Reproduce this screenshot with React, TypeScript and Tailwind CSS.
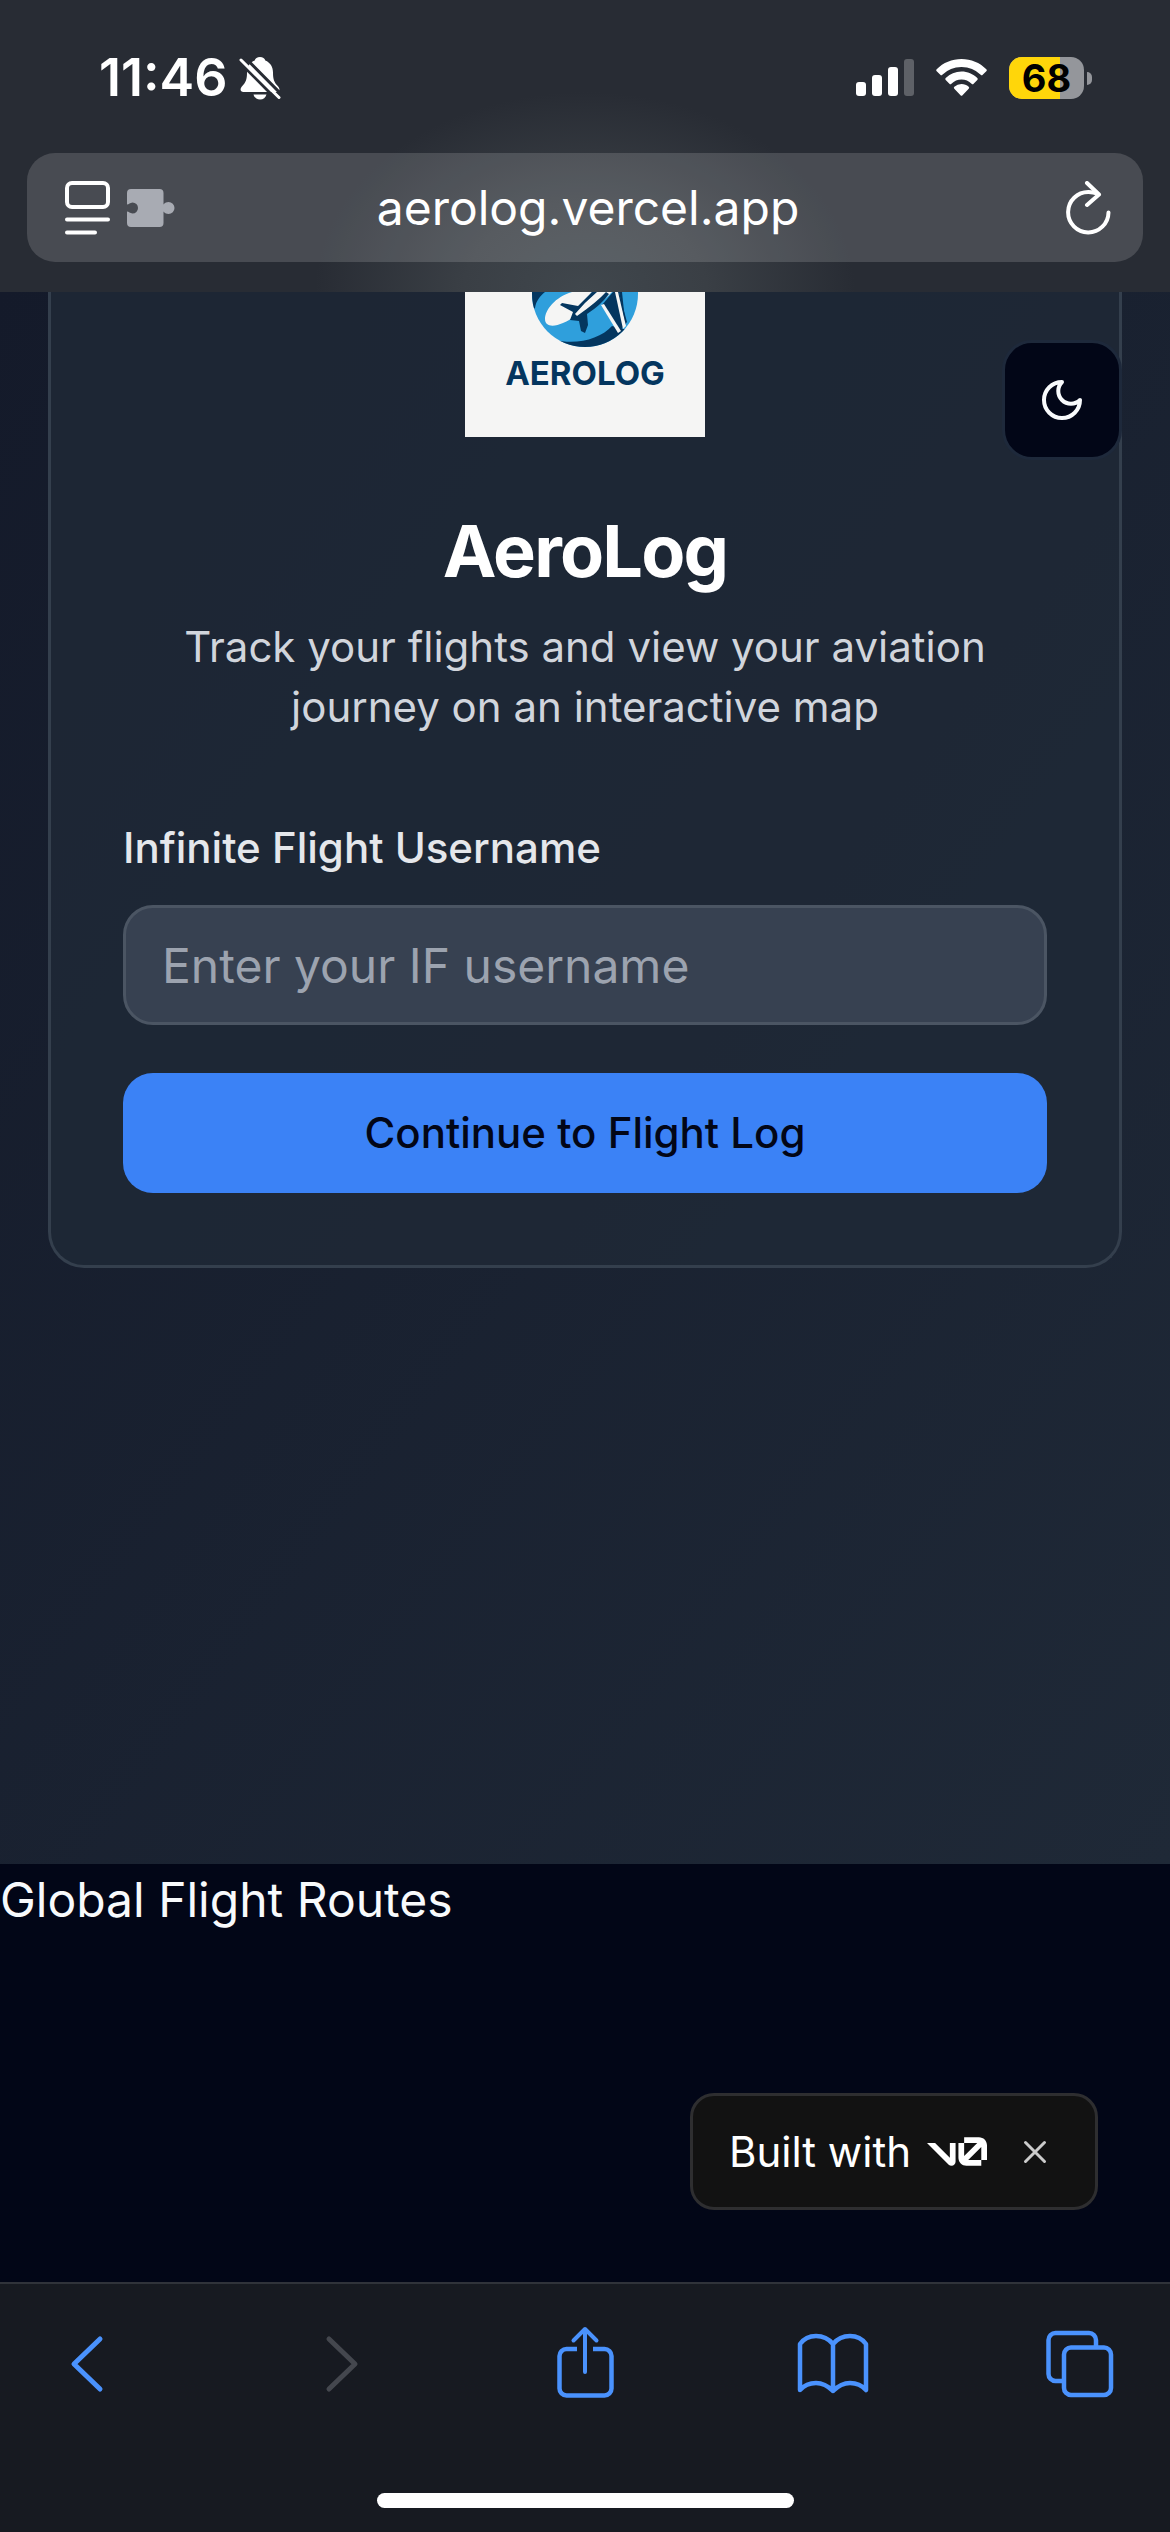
import { useState, type ReactNode } from "react";

export default function App() {
  const [username, setUsername] = useState("");
  const [badge, setBadge] = useState(true);

  return (
    <div className="relative flex min-h-screen flex-col bg-[#020617] font-['Inter','Liberation_Sans',sans-serif]">
      <BrowserHeader />

      <main className="flex grow flex-col">
        <section className="bg-linear-to-br from-[#141a2a] to-[#1f2937] px-12 pb-[596px]">
          <div className="rounded-b-[36px] border-3 border-t-0 border-[#343f4d] bg-[#1f2937]/80 px-18 pb-18">
            <Logo />
            <div className="pt-[78px] text-center">
              <h1 className="text-[72px]/[72px] font-bold tracking-tight text-white">AeroLog</h1>
              <p className="mx-auto mt-[30px] max-w-[840px] text-[42px]/[60px] text-gray-300">
                Track your flights and view your aviation journey on an interactive map
              </p>
            </div>
            <form className="mt-[81px] flex flex-col" onSubmit={(e) => e.preventDefault()}>
              <label htmlFor="username" className="text-[42px]/[60px] font-medium text-gray-200">
                Infinite Flight Username
              </label>
              <input
                id="username"
                type="text"
                placeholder="Enter your IF username"
                value={username}
                onChange={(e) => setUsername(e.target.value)}
                className="mt-[27px] h-[120px] w-full rounded-[30px] border-3 border-[#4b5563] bg-[#374151] px-9 text-5xl text-white outline-none placeholder:text-[#9ca3af]"
              />
              <button type="submit" className="mt-12 h-[120px] w-full rounded-[30px] bg-[#3b82f6] text-[42px]/[60px] font-medium text-[#020617]">
                Continue to Flight Log
              </button>
            </form>
          </div>
        </section>
        <section>
          <h2 className="text-[48px]/[72px] text-slate-50">Global Flight Routes</h2>
        </section>
      </main>

      <BrowserToolbar />

      <button
        type="button"
        aria-label="Toggle theme"
        className="absolute top-[340px] right-12 flex size-[120px] items-center justify-center rounded-[30px] border-3 border-[#1e293b] bg-[#020617] text-slate-50">
        <svg className="size-12" viewBox="0 0 24 24" fill="none" stroke="currentColor" strokeWidth="2" strokeLinecap="round" strokeLinejoin="round">
          <path d="M12 3a6 6 0 0 0 9 9 9 9 0 1 1-9-9Z" />
        </svg>
      </button>

      {badge && (
        <div className="absolute right-[72px] bottom-[322px] flex h-[117px] items-center rounded-3xl border-3 border-[#2e2e30] bg-[#121212] pr-12 pl-9 text-white">
          <a href="#v0" className="flex items-center gap-4 text-[42px]/[60px]">
            Built with
            <V0Mark />
          </a>
          <button type="button" aria-label="Close" className="ml-9 text-[#cccccc]" onClick={() => setBadge(false)}>
            <svg className="size-6" viewBox="0 0 24 24" fill="none" stroke="currentColor" strokeWidth="3" strokeLinecap="round">
              <path d="M2.500 2.500l19 19M21.500 2.500l-19 19" />
            </svg>
          </button>
        </div>
      )}
    </div>
  );
}

function BrowserHeader() {
  return (
    <header className="h-[292px] bg-[#282c34] bg-[radial-gradient(ellipse_270px_200px_at_50%_100%,#40474d,#3a3f45_45%,#282c34)] px-[27px] pt-[42px] text-white">
      <div className="flex h-[72px] items-center justify-between pr-[51px] pl-[72px]">
        <div className="flex items-center gap-3">
          <span className="text-[52px]/[72px] font-semibold">11:46</span>
          <BellOff />
        </div>
        <div className="flex items-center gap-[22px]">
          <Signal />
          <Wifi />
          <Battery level={68} />
        </div>
      </div>
      <div className="mt-[39px] flex h-[109px] items-center justify-between rounded-[28px] bg-white/15 pr-8 pl-[38px]">
        <div className="flex w-[112px] items-center gap-[17px]">
          <button type="button" aria-label="Page menu">
            <svg className="h-[54px] w-[45px]" viewBox="0 0 45 54" fill="none" stroke="currentColor" strokeWidth="4" strokeLinecap="round">
              <rect x="2" y="2" width="41" height="24" rx="5" />
              <path d="M2 38.500h41M2 51.500h28" />
            </svg>
          </button>
          <button type="button" aria-label="Extensions" className="text-[#a8abb3]">
            <svg className="h-[38px] w-[48px]" viewBox="0 0 48 38" fill="currentColor">
              <path d="M4 0h28.500a4 4 0 0 1 4 4v11.500c1.500-1.800 3.300-2.500 5-2.500a6 6 0 0 1 0 12c-1.700 0-3.500-.7-5-2.500V34a4 4 0 0 1-4 4H4a4 4 0 0 1-4-4V22.500c2 .1 2.800 1.800 5.500 2a5.500 5.500 0 1 0 0-11c-2.700.2-3.500 1.900-5.500 2V4a4 4 0 0 1 4-4Z" />
            </svg>
          </button>
        </div>
        <span className="text-[48px]/[60px]">aerolog.vercel.app</span>
        <div className="flex w-[112px] justify-end">
          <button type="button" aria-label="Reload">
            <svg className="h-[54px] w-[45px]" viewBox="0 0 45 54" fill="none" stroke="currentColor" strokeWidth="4" strokeLinecap="round" strokeLinejoin="round">
              <path d="M42.500 31.500a20.200 20.200 0 1 1-20-20.500q5 0 9 1.800" />
              <path d="M21 2l12 11.500L21 24" />
            </svg>
          </button>
        </div>
      </div>
    </header>
  );
}

function BellOff() {
  return (
    <svg className="h-[44px] w-[42px]" viewBox="0 0 42 44" fill="none">
      <path d="M21 1c-2.800 0-4.700 1.500-5.300 3.500C10.800 6.500 8 10.800 8 16.500c0 7-1.200 9.800-4.500 13.200C.6 32.800 1 36 4.500 36h33c3.500 0 4-3.200 1-6.300-3.300-3.400-4.500-6.200-4.500-13.200 0-5.700-2.800-10-7.700-12C25.700 2.500 23.800 1 21 1Z" fill="currentColor" />
      <path d="M14.500 38.500h13c-.8 3-3.200 5-6.500 5s-5.700-2-6.500-5Z" fill="currentColor" />
      <path d="M5.500 1L42 38M0 5.500L38 44" stroke="#282c34" strokeWidth="3" />
      <path d="M2 4l38 37.500" stroke="currentColor" strokeWidth="3" strokeLinecap="round" />
    </svg>
  );
}

function Signal() {
  return (
    <svg className="h-[38px] w-[58px]" viewBox="0 0 58 38" fill="currentColor">
      <rect x="0" y="23" width="10" height="14" rx="3" />
      <rect x="16" y="16" width="10" height="21" rx="3" />
      <rect x="32" y="8" width="10" height="29" rx="3" />
      <rect x="48" y="0" width="10" height="37" rx="3" opacity="0.25" />
    </svg>
  );
}

function Wifi() {
  return (
    <svg className="h-[38px] w-[51px]" viewBox="0 0 51 38" fill="currentColor">
      <path d="M25.500 0C35 0 43.800 3.700 50.300 10.200q1 1 0 2l-3.600 3.600q-1 1-2 0A27.200 27.200 0 0 0 25.500 8 27.200 27.200 0 0 0 6.300 15.800q-1 1-2 0L.7 12.200q-1-1 0-2C7.200 3.700 16 0 25.500 0Z" />
      <path d="M25.500 12.500c6 0 11.600 2.400 15.800 6.500q1 1 0 2l-3.700 3.700q-1 1-2 0A14.500 14.500 0 0 0 25.500 20.500a14.500 14.500 0 0 0-10.100 4.200q-1 1-2 0L9.700 21q-1-1 0-2a22.500 22.500 0 0 1 15.800-6.500Z" />
      <path d="M25.500 25c2.700 0 5.200 1 7.200 2.700q1 1 0 2l-6.200 6.600q-1 1-2 0l-6.200-6.600q-1-1 0-2A11 11 0 0 1 25.500 25Z" />
    </svg>
  );
}

function Battery(props: { level: number }) {
  return (
    <div className="flex items-center gap-[3px]">
      <div className="relative flex h-[42px] w-[75px] items-center justify-center rounded-[13px] bg-[#94969b]">
        <div className="absolute inset-y-0 left-0 rounded-l-[13px] bg-[#ffd60a]" style={{ width: `${props.level}%` }} />
        <span className="relative text-[38px]/[42px] font-bold text-black">{props.level}</span>
      </div>
      <div className="h-[13px] w-[5px] rounded-r-full bg-[#94969b]" />
    </div>
  );
}

// scrolled under the header, only the lower part of the emblem shows
function Logo() {
  return (
    <div className="mx-auto flex h-[145px] w-[240px] flex-col items-center bg-[#f5f5f4]">
      <svg className="h-[55px] w-[106px]" viewBox="0 0 106 55">
        <clipPath id="emblem">
          <circle cx="53" cy="2" r="53" />
        </clipPath>
        <g clipPath="url(#emblem)">
          <rect width="106" height="55" fill="#2f9fdc" />
          <path d="M0 0h13C8 4 4 9 3 16L0 18Z" fill="#04365f" />
          <path d="M22 48C46 53 68 47 80 34L96 38 80 55H30Z" fill="#04365f" />
          <path d="M40 0C23 5 13 18 13 27c0 8 9 8 18 4 5-2 8-4 10-6L60 0Z" fill="#f5f5f4" />
          <path d="M62 0L46 14 41 25 46 27C56 18 70 11 80 0Z" fill="#f5f5f4" />
          <path d="M60 0L46 14 30 11 28 13 41 20 38 28 47 29 49 39 53 41 56 33 55 22Q69 13 77 2L74 0Q65 10 45 24L43 22Q53 10 65 0Z" fill="#04365f" />
          <path d="M70 13L81 0h6l8 30-8 10Z" fill="#04365f" />
          <path d="M69 13l3-1 17 27-3 2Z" fill="#f5f5f4" />
          <path d="M83 0h3l8 34-3 3Z" fill="#f5f5f4" />
          <path d="M87 0h3l3 29Z" fill="#04365f" />
        </g>
      </svg>
      <span className="mt-[6px] text-[33px]/[40px] font-bold text-[#04365f]">AEROLOG</span>
    </div>
  );
}

function V0Mark() {
  return (
    <svg className="h-[29px] w-[60px]" viewBox="0 0 147 70" fill="currentColor" role="img" aria-label="v0">
      <path d="M56 50.203V14h14v46.156C70 65.593 65.593 70 60.156 70c-2.596 0-5.158-1-7-2.843L0 14h19.797L56 50.203Z" />
      <path d="M147 56h-14V23.953L100.953 56H133v14H96.688C85.814 70 77 61.186 77 50.313V14h14v32.156L123.156 14H91V0h36.313C138.186 0 147 8.814 147 19.688V56Z" />
    </svg>
  );
}

function ToolbarButton(props: { label: string; disabled?: boolean; children: ReactNode }) {
  return (
    <button type="button" aria-label={props.label} disabled={props.disabled} className="text-[#4a92fd] disabled:text-[#44474e]">
      <svg className="size-20" viewBox="0 0 80 80" fill="none" stroke="currentColor" strokeWidth="4.500" strokeLinecap="round" strokeLinejoin="round">
        {props.children}
      </svg>
    </button>
  );
}

function BrowserToolbar() {
  return (
    <nav className="flex h-[250px] flex-col items-center justify-between border-t-2 border-[#30333a] bg-[#171a21] pt-[38px] pb-6">
      <div className="flex w-full justify-between px-[46px]">
        <ToolbarButton label="Back">
          <path d="M54 17L28 42l26 25" strokeWidth="5" />
        </ToolbarButton>
        <ToolbarButton label="Forward" disabled>
          <path d="M33 17l26 25-26 25" strokeWidth="5" />
        </ToolbarButton>
        <ToolbarButton label="Share">
          <path d="M32 27H21.500a7 7 0 0 0-7 7v32.500a7 7 0 0 0 7 7h38a7 7 0 0 0 7-7V34a7 7 0 0 0-7-7H48" strokeLinecap="butt" />
          <path d="M40 50V7M28.500 18.500L40 7l11.500 11.500" strokeWidth="4" />
        </ToolbarButton>
        <ToolbarButton label="Bookmarks">
          <path d="M38 22C33 16 27 14 21 14S9 16.500 5 22v46c4-4.500 9-7 16-7s12 3 17 8c5-5 10-8 17-8s12 2.500 16 7V22c-4-5.500-10-8-16-8s-12 2-17 8ZM38 22v47" />
        </ToolbarButton>
        <ToolbarButton label="Tabs">
          <rect x="20" y="25.500" width="47" height="47.500" rx="7" />
          <path d="M52 25v-7a7 7 0 0 0-7-7H11.500a7 7 0 0 0-7 7v34a7 7 0 0 0 7 7H19" strokeLinecap="butt" />
        </ToolbarButton>
      </div>
      <div className="h-[15px] w-[417px] rounded-full bg-white" />
    </nav>
  );
}
